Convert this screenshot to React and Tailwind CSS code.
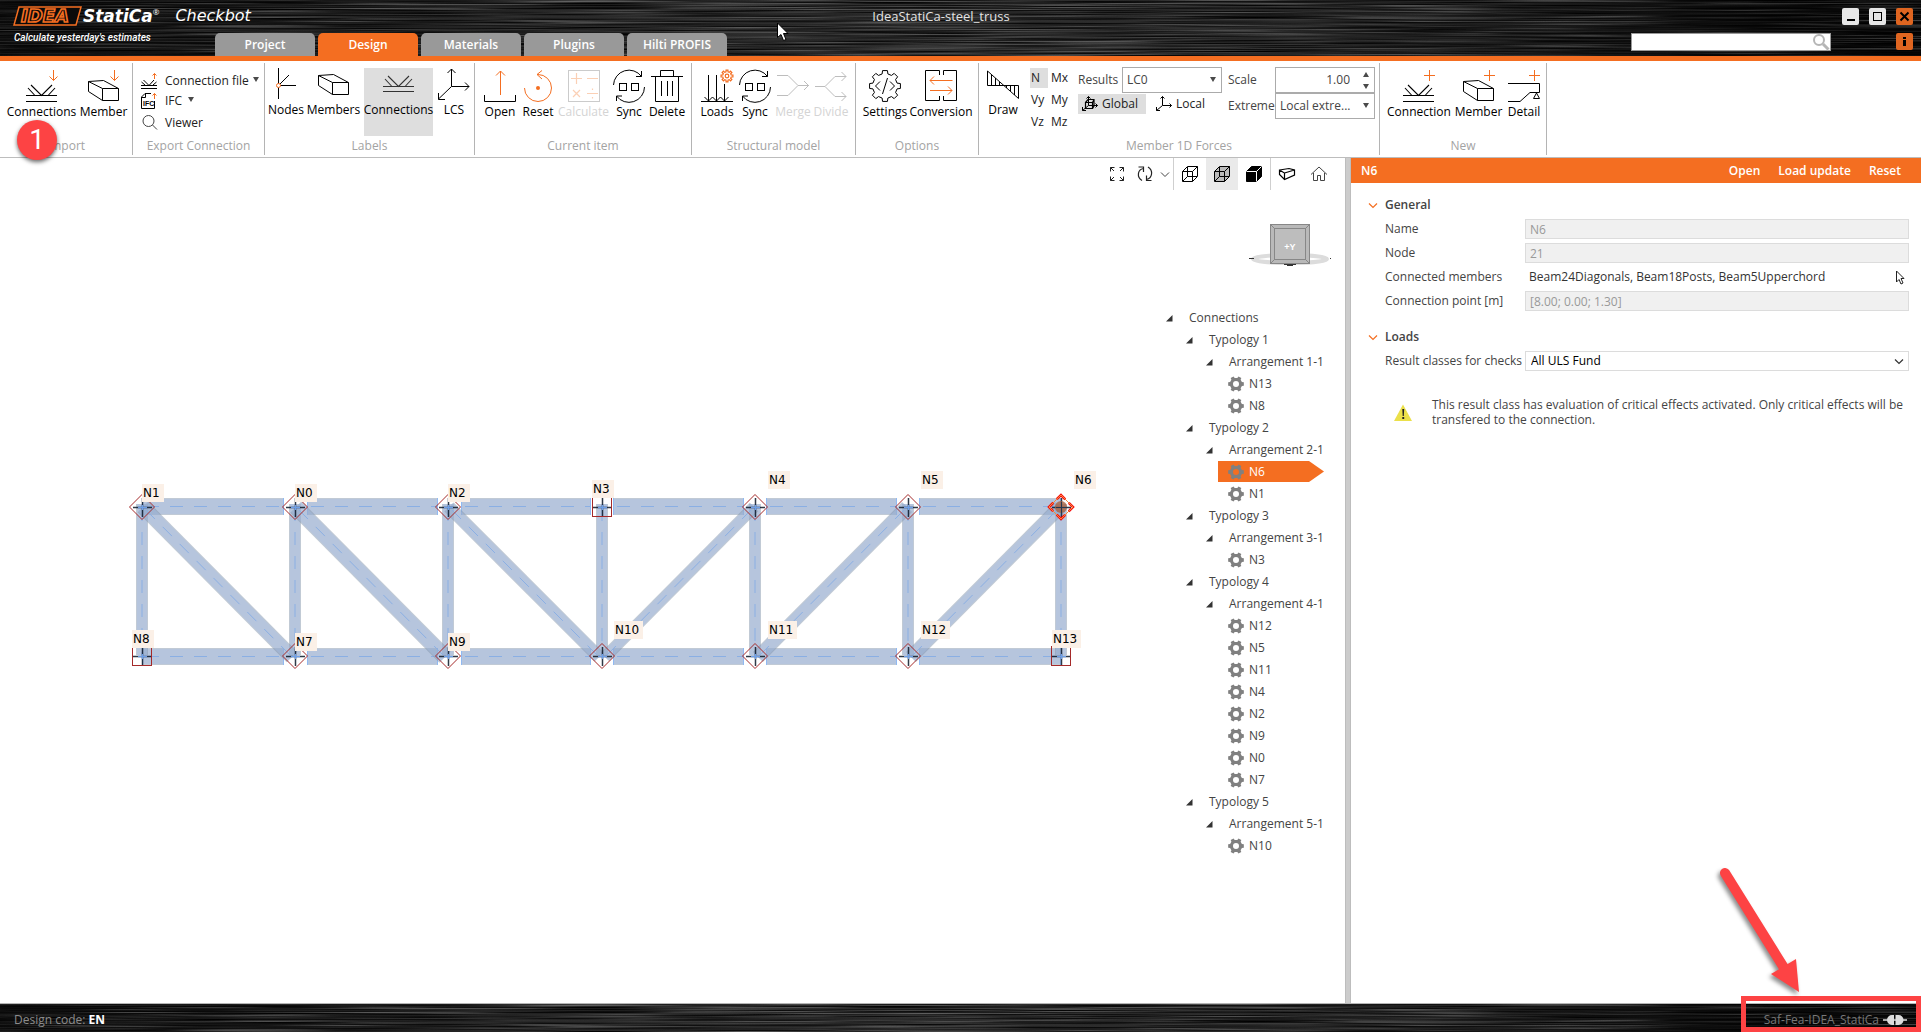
import React from "react";

const ORANGE = "#f46e21";

/* ---------- shared drawing helpers ---------- */

function Icon({ size = 32, w, h, stroke = "#000", sw = 1, className = "", children }) {
  const width = w || size;
  const height = h || size;
  return (
    <svg
      width={width}
      height={height}
      viewBox={`0 0 ${width} ${height}`}
      fill="none"
      stroke={stroke}
      strokeWidth={sw}
      className={`block shrink-0 overflow-visible ${className}`}
      aria-hidden="true"
    >
      {children}
    </svg>
  );
}

function gearPath(cx, cy, outer, inner, teeth) {
  const pts = [];
  const step = (Math.PI * 2) / teeth;
  for (let i = 0; i < teeth; i++) {
    const a = i * step;
    [
      [inner, -0.3],
      [outer, -0.2],
      [outer, 0.2],
      [inner, 0.3],
    ].forEach(([r, k]) => {
      pts.push(`${(cx + r * Math.cos(a + k * step)).toFixed(2)} ${(cy + r * Math.sin(a + k * step)).toFixed(2)}`);
    });
  }
  return `M${pts.join("L")}Z`;
}

function Brushed({ id }) {
  return (
    <svg className="absolute inset-0 h-full w-full" aria-hidden="true">
      <defs>
        <linearGradient id={`${id}-g`} x1="0" x2="1" y1="0" y2="0">
          <stop offset="0" stopColor="#0c0c0c" />
          <stop offset="0.3" stopColor="#2a2a2a" />
          <stop offset="0.5" stopColor="#303030" />
          <stop offset="0.75" stopColor="#232323" />
          <stop offset="0.92" stopColor="#0a0a0a" />
          <stop offset="1" stopColor="#050505" />
        </linearGradient>
        <filter id={`${id}-f`} x="0" y="0" width="100%" height="100%">
          <feTurbulence type="fractalNoise" baseFrequency="0.006 0.85" numOctaves="2" seed="4" />
          <feColorMatrix values="0 0 0 0 0.7  0 0 0 0 0.7  0 0 0 0 0.7  0.8 0 0 0 -0.36" />
        </filter>
        <filter id={`${id}-d`} x="0" y="0" width="100%" height="100%">
          <feTurbulence type="fractalNoise" baseFrequency="0.006 0.85" numOctaves="2" seed="9" />
          <feColorMatrix values="0 0 0 0 0  0 0 0 0 0  0 0 0 0 0  2.4 0 0 0 -0.95" />
        </filter>
      </defs>
      <rect width="100%" height="100%" fill={`url(#${id}-g)`} />
      <rect width="100%" height="100%" filter={`url(#${id}-f)`} />
      <rect width="100%" height="100%" filter={`url(#${id}-d)`} />
    </svg>
  );
}

/* ---------- ribbon icons ---------- */

function Joint({ top = 15, gap = 6, badge, stroke = "#000" }) {
  const base = top + 10;
  return (
    <Icon stroke={stroke}>
      <path d={`M0 ${base + 0.5}H31M0 ${base + gap + 0.5}H31`} />
      <path
        d={`M5 ${top}L15.500 ${base + 0.5}L26 ${top}M2 ${top + 3}L8.500 ${base}M29 ${top + 3}L22.500 ${base}`}
        strokeWidth="1.1"
      />
      {badge === "down" && <path d="M27.500 0V10.500M23.500 6.500L27.500 10.500L31.500 6.500" stroke={ORANGE} />}
      {badge === "plus" && <path d="M26.500 0V11M21 5.500H32" stroke={ORANGE} />}
    </Icon>
  );
}

function Box({ badge, up = 0 }) {
  return (
    <Icon>
      <g transform={`translate(0 ${-up})`}>
        <path d="M14.500 18.500H30.500V30.500H14.500ZM0.500 11.500L14.500 18.500M0.500 11.500L15.500 10.500L30.500 18.500M0.500 11.500V21.500L14.500 30.500" />
      </g>
      {badge === "down" && <path d="M26.500 0V10.500M22.500 6.500L26.500 10.500L30.500 6.500" stroke={ORANGE} />}
      {badge === "plus" && <path d="M26.500 0V11M21 5.500H32" stroke={ORANGE} />}
    </Icon>
  );
}

const NodesIcon = () => (
  <Icon>
    <path d="M8.500 0V31M10 17.500H26M10 16L19 7" />
    <circle cx="8.500" cy="17.500" r="2" stroke={ORANGE} fill="#fff" />
  </Icon>
);

const LcsIcon = () => (
  <Icon>
    <path d="M13.500 1V18.500H31M9.500 5L13.500 1L17.500 5M27 14.500L31 18.500L27 22.500M13.500 18.500L0.500 31M0.500 25V31.500H7" />
  </Icon>
);

const OpenIcon = () => (
  <Icon>
    <path d="M0.500 25V31.500H31.500V25" />
    <path d="M16.500 25V1M12 5.500L16.500 1L21 5.500" stroke={ORANGE} />
  </Icon>
);

const ResetIcon = () => (
  <Icon stroke={ORANGE}>
    <path d="M2.500 18A13.500 13.500 0 1 0 16 4.500H15M20 0.500L15 4.500L20 9" />
    <circle cx="16" cy="18" r="2" fill={ORANGE} stroke="none" />
  </Icon>
);

const CalculateIcon = () => (
  <Icon stroke="#cbcbcb">
    <rect x="0.500" y="0.500" width="31" height="31" />
    <path
      d="M3 8.500H14M8.500 3V14M19 8.500H30M5 20L12 27M12 20L5 27M19 23.500H30M24.500 18.500V20M24.500 27V28.500"
      stroke="#fbd0b5"
      strokeWidth="1.200"
    />
  </Icon>
);

const SyncIcon = () => (
  <Icon>
    <path d="M0.500 15A15.500 15.500 0 0 1 28.500 6.500M28.500 1V6.500H23M31.500 17A15.500 15.500 0 0 1 3.500 26M3.500 31V26H9" />
    <rect x="6.500" y="13.500" width="7" height="7" />
    <rect x="18.500" y="13.500" width="7" height="7" />
  </Icon>
);

const DeleteIcon = () => (
  <Icon>
    <path d="M0 6.500H32M9.500 6V0.500H22.500V6M4.500 7V31.500H27.500V7M10.500 11V26M16.500 11V26M21.500 11V26" />
  </Icon>
);

const LoadsIcon = () => (
  <Icon>
    <path d="M0 31.500H32M7.500 5V31M15.500 5V31M23.500 14V31M3.500 27L7.500 31L11.500 27L15.500 31L19.500 27L23.500 31L27.500 27" />
    <path d={gearPath(26, 6, 6, 4.3, 8)} stroke={ORANGE} strokeWidth="1.200" />
    <circle cx="26" cy="6" r="1.800" stroke={ORANGE} strokeWidth="1.200" />
  </Icon>
);

const MergeIcon = () => (
  <Icon stroke="#bdbdbd">
    <path d="M0 5.500H11L21 15.500L11 25.500H0M21 15.500H32M27 11L31.500 15.500L27 20" />
  </Icon>
);

const DivideIcon = () => (
  <Icon stroke="#bdbdbd">
    <path d="M0 16.500H10L20 6.500H31M10 16.500L20 26.500H31M26.500 2L31 6.500L26.500 11M26.500 22L31 26.500L26.500 31" />
  </Icon>
);

const SettingsIcon = () => (
  <Icon>
    <path d={gearPath(16, 16, 15.6, 12.4, 8)} strokeLinejoin="round" />
    <path d="M11 11.500L6.500 16L11 20.500M21 11.500L25.500 16L21 20.500M18.500 8L13.500 24" />
  </Icon>
);

const ConversionIcon = () => (
  <Icon>
    <path d="M14.500 5V0.500H0.500V30.500H14.500V26M18.500 5V0.500H31.500V30.500H18.500V26" />
    <path d="M27.500 10.500H5M9 6.500L5 10.500L9 14.500M5 20.500H27M23 16.500L27 20.500L23 24.500" stroke={ORANGE} />
  </Icon>
);

const DrawIcon = () => (
  <Icon>
    <path d="M0.500 3V17.500H31.500V30.500L0.500 3M4.500 7V17M8.500 10V17M12.500 14V17M19.500 18V20M23.500 18V23M27.500 18V27" />
  </Icon>
);

const DetailIcon = () => (
  <Icon>
    <path d="M0 13.500H31.500V22.500H22L12 31.500H0M28.500 23L25.500 28.500H31.500Z" />
    <path d="M26.500 0V11M21 5.500H32" stroke={ORANGE} />
  </Icon>
);

const ConnFileIcon = () => (
  <Icon size={16}>
    <path d="M0 12.500H16M0 15.500H16M2.500 7L8 12.500L13 7M0.500 9L4 12M15.500 9L12 12" />
    <path d="M13.500 6V0.500M11.500 2.500L13.500 0.500L15.500 2.500" stroke={ORANGE} />
  </Icon>
);

const IfcIcon = () => (
  <Icon size={16}>
    <path d="M10 0.500H4L0.500 4V15.500H13.500V8M4.500 0.500V4.500H0.500" />
    <text x="2" y="13" fontSize="7" fontWeight="700" fill="#000" stroke="none" fontFamily="Liberation Sans, sans-serif">
      IFC
    </text>
    <path d="M13.500 6V0.500M11.500 2.500L13.500 0.500L15.500 2.500" stroke={ORANGE} />
  </Icon>
);

const ViewerIcon = () => (
  <Icon size={16} stroke="#444">
    <circle cx="7.500" cy="6" r="5.500" />
    <path d="M11.500 10L16 14.500" />
  </Icon>
);

const AxesIcon = ({ solid }) => (
  <Icon size={16}>
    <path d="M6.500 0.500V9.500H15.500M4.500 2.500L6.500 0.500L8.500 2.500M13.500 7.500L15.500 9.500L13.500 11.500M6.500 9.500L0.500 14.500M0.500 11V14.500H4" />
    {solid && <path d="M3.500 6.500H10.500V12.500H3.500ZM3.500 6.500L6 3.500H12V10L10.500 12.500M10.500 6.500L12 3.500" strokeWidth="1.200" />}
  </Icon>
);

/* ---------- ribbon building blocks ---------- */

function Tool({ icon, label, width, active, disabled, raised }) {
  return (
    <button
      type="button"
      disabled={disabled}
      className={`flex h-17 flex-col items-center ${width} ${raised ? "" : "pt-0.5"} ${active ? "bg-[#dedede]" : ""} ${
        disabled ? "text-[#d4d4d4]" : "text-black"
      }`}
    >
      {icon}
      <span className="mt-0.5 whitespace-nowrap leading-4">{label}</span>
    </button>
  );
}

function Group({ title, width, children, pad = "pl-2" }) {
  return (
    <section className={`flex shrink-0 flex-col border-r border-[#b4b4b4] ${width}`}>
      <div className={`flex h-[75px] items-start pt-[5px] ${pad}`}>{children}</div>
      <h2 className="text-center leading-4 text-[#a3a3a3]">{title}</h2>
    </section>
  );
}

function Triangle({ up, className = "" }) {
  return (
    <svg width="6" height="5" viewBox="0 0 6 5" className={`block shrink-0 ${className}`} aria-hidden="true">
      <path d={up ? "M0 5L3 0L6 5Z" : "M0 0H6L3 5Z"} fill="#4a4a4a" />
    </svg>
  );
}

function RibbonSelect({ id, value, width }) {
  return (
    <div className={`relative ${width}`}>
      <select
        id={id}
        className="block h-[26px] w-full appearance-none rounded-none border border-[#ababab] bg-white pr-5 pl-1 text-[#444]"
        defaultValue={value}
      >
        <option>{value}</option>
      </select>
      <Triangle className="pointer-events-none absolute top-2.5 right-1.5" />
    </div>
  );
}

function Ribbon() {
  const force = "h-5 px-px text-left text-[#222]";
  return (
    <div className="flex h-[97px] shrink-0 border-b border-[#bdbdbd] bg-white pt-0.5 pb-0.5">
      <Group title="Import" width="w-[133px]">
        <div className="flex gap-1.5">
          <Tool icon={<Joint badge="down" />} label="Connections" width="w-[67px]" />
          <Tool icon={<Box badge="down" />} label="Member" width="w-[45px]" />
        </div>
      </Group>
      <Group title="Export Connection" width="w-[132px]" pad="pl-2">
        <div className="flex flex-col pt-px">
          <button type="button" className="flex h-6 items-center gap-2 whitespace-nowrap">
            <ConnFileIcon />
            Connection file <Triangle className="-mt-1 -ml-1" />
          </button>
          <button type="button" className="flex h-4 items-center gap-2">
            <IfcIcon />
            IFC <Triangle className="-mt-1 -ml-0.5" />
          </button>
          <button type="button" className="flex h-7 items-center gap-2">
            <ViewerIcon />
            Viewer
          </button>
        </div>
      </Group>
      <Group title="Labels" width="w-[210px]" pad="pl-1">
        <div className="flex gap-1">
          <Tool raised icon={<NodesIcon />} label="Nodes" width="w-[34px]" />
          <Tool raised icon={<Box up={4} />} label="Members" width="w-[53px]" />
          <Tool raised active icon={<Joint top={8} gap={5} stroke="#333" />} label="Connections" width="w-[69px]" />
          <Tool raised icon={<LcsIcon />} label="LCS" width="w-[34px]" />
        </div>
      </Group>
      <Group title="Current item" width="w-[217px]">
        <div className="flex gap-1">
          <Tool icon={<OpenIcon />} label="Open" width="w-[34px]" />
          <Tool icon={<ResetIcon />} label="Reset" width="w-[34px]" />
          <Tool disabled icon={<CalculateIcon />} label="Calculate" width="w-[49px]" />
          <Tool icon={<SyncIcon />} label="Sync" width="w-[34px]" />
          <Tool icon={<DeleteIcon />} label="Delete" width="w-[34px]" />
        </div>
      </Group>
      <Group title="Structural model" width="w-[164px]">
        <div className="flex gap-1">
          <Tool icon={<LoadsIcon />} label="Loads" width="w-[34px]" />
          <Tool icon={<SyncIcon />} label="Sync" width="w-[34px]" />
          <Tool disabled icon={<MergeIcon />} label="Merge" width="w-[34px]" />
          <Tool disabled icon={<DivideIcon />} label="Divide" width="w-[34px]" />
        </div>
      </Group>
      <Group title="Options" width="w-[123px]">
        <div className="flex gap-1">
          <Tool icon={<SettingsIcon />} label="Settings" width="w-[42px]" />
          <Tool icon={<ConversionIcon />} label="Conversion" width="w-[62px]" />
        </div>
      </Group>
      <Group title="Member 1D Forces" width="w-[401px]" pad="pl-[7px]">
        <Tool raised icon={<DrawIcon />} label="Draw" width="w-[34px]" />
        <div className="ml-2.5 grid grid-cols-[18px_20px] gap-x-0.5 gap-y-0.5">
          <button type="button" className={`${force} bg-[#dedede]`}>N</button>
          <button type="button" className={force}>Mx</button>
          <button type="button" className={force}>Vy</button>
          <button type="button" className={force}>My</button>
          <button type="button" className={force}>Vz</button>
          <button type="button" className={force}>Mz</button>
        </div>
        <div className="-mt-px ml-2 w-36">
          <div className="flex items-center justify-between">
            <label htmlFor="results" className="text-[#444]">Results</label>
            <RibbonSelect id="results" value="LC0" width="w-[100px]" />
          </div>
          <div className="mt-px flex gap-1.5">
            <button type="button" className="flex h-5 w-[68px] items-center gap-1 bg-[#dedede] px-1">
              <AxesIcon solid />
              Global
            </button>
            <button type="button" className="flex h-5 items-center gap-1 px-1">
              <AxesIcon />
              Local
            </button>
          </div>
        </div>
        <div className="-mt-px ml-1.5 grid grid-cols-[47px_100px] items-center text-[#444]">
          <label htmlFor="scale">Scale</label>
          <div className="flex h-[26px] border border-[#ababab]">
            <input id="scale" defaultValue="1.00" className="w-full min-w-0 pr-1 text-right text-[#444] outline-none" />
            <div className="flex w-5 shrink-0 flex-col items-center justify-around pl-1">
              <button type="button" aria-label="Increase scale"><Triangle up /></button>
              <button type="button" aria-label="Decrease scale"><Triangle /></button>
            </div>
          </div>
          <label htmlFor="extreme">Extreme</label>
          <RibbonSelect id="extreme" value="Local extre..." width="w-[100px]" />
        </div>
      </Group>
      <Group title="New" width="w-[167px]">
        <div className="flex gap-1.5">
          <Tool icon={<Joint badge="plus" />} label="Connection" width="w-[62px]" />
          <Tool icon={<Box badge="plus" />} label="Member" width="w-[45px]" />
          <Tool icon={<DetailIcon />} label="Detail" width="w-[34px]" />
        </div>
      </Group>
    </div>
  );
}

/* ---------- title bar ---------- */

function Logo() {
  return (
    <div className="w-[215px] shrink-0 pt-1.5 pl-3">
      <div className="flex items-center whitespace-nowrap text-white italic">
        <svg width="71" height="20" viewBox="0 0 71 20" className="block shrink-0" role="img" aria-label="IDEA">
          <path d="M7 1H69L64 19H2Z" fill="#0a0a0a" stroke={ORANGE} strokeWidth="1.500" />
          <text
            x="9"
            y="16"
            fontFamily="DejaVu Sans, sans-serif"
            fontWeight="700"
            fontStyle="italic"
            fontSize="18"
            fill="#0a0a0a"
            stroke={ORANGE}
            strokeWidth="1.600"
          >
            IDEA
          </text>
        </svg>
        <span className="font-['DejaVu_Sans',sans-serif] text-[17px] leading-5 font-bold">StatiCa</span>
        <sup className="text-[8px]">®</sup>
        <span className="ml-4 font-['DejaVu_Sans',sans-serif] text-[16px] leading-5">Checkbot</span>
      </div>
      <p className="mt-1 ml-0.5 font-['Roboto','Liberation_Sans',sans-serif] text-[10px] leading-4 font-medium text-white italic">
        Calculate yesterday's estimates
      </p>
    </div>
  );
}

function TitleBar() {
  const tabs = ["Project", "Design", "Materials", "Plugins", "Hilti PROFIS"];
  const winBtn = "flex h-[17px] w-[17px] items-center justify-center rounded-[2px]";
  return (
    <header className="relative h-[61px] shrink-0 overflow-hidden border-b-[5px] border-[#f46e21] bg-[#111]">
      <Brushed id="top" />
      <div className="relative flex h-14">
        <Logo />
        <div className="flex min-w-0 flex-1 flex-col justify-between">
          <h1 className="pt-2 pl-9 text-center text-[13px] leading-4 text-[#e4e4e4]">IdeaStatiCa-steel_truss</h1>
          <nav className="flex gap-[3px]">
            {tabs.map((t) => (
              <button
                key={t}
                type="button"
                className={`h-[23px] w-[100px] rounded-t-[5px] font-semibold text-white ${
                  t === "Design" ? "bg-[#f46e21]" : "bg-[#999]"
                }`}
              >
                {t}
              </button>
            ))}
          </nav>
        </div>
        <div className="flex w-[290px] shrink-0 flex-col gap-2 pt-2 pr-2">
          <div className="flex justify-end gap-2.5">
            <button type="button" aria-label="Minimize" className={`${winBtn} bg-[#e6e6e6]`}>
              <span className="mt-1.5 h-0.5 w-2 bg-black" />
            </button>
            <button type="button" aria-label="Maximize" className={`${winBtn} bg-[#e6e6e6]`}>
              <span className="h-[9px] w-[9px] border border-black" />
            </button>
            <button type="button" aria-label="Close" className={`${winBtn} bg-[#df6520]`}>
              <Icon size={9} sw={2}>
                <path d="M0.500 0.500L8.500 8.500M8.500 0.500L0.500 8.500" />
              </Icon>
            </button>
          </div>
          <div className="flex justify-between">
            <div className="flex h-[18px] w-[200px] border border-[#999] bg-white">
              <input aria-label="Search" className="min-w-0 flex-1 px-1 outline-none" />
              <Icon size={17} stroke="#b5b5b5" sw={2}>
                <circle cx="6" cy="6" r="5" />
                <path d="M10 10L15.500 15.500" strokeWidth="3" />
              </Icon>
            </div>
            <button type="button" aria-label="Information" className={`${winBtn} bg-[#df6520]`}>
              <Icon w={3} h={9} stroke="none">
                <path d="M0 0H3V2H0ZM0 3H3V9H0Z" fill="#000" />
              </Icon>
            </button>
          </div>
        </div>
      </div>
    </header>
  );
}

/* ---------- model view ---------- */

const XS = [142, 295, 448, 602, 755, 908, 1061];
const TOP = 349;
const BOTTOM = 498;
const SPANS = [
  [142, 284],
  [307, 438],
  [461, 591],
  [613, 744],
  [766, 897],
  [919, 1061],
];
const DIAGONALS = [
  [0, 1, 15],
  [1, 2, 16],
  [2, 3, 13],
  [4, 3, 12],
  [5, 4, 14],
  [6, 5, 14],
];
const NODES = [
  { n: "N1", c: 0, y: TOP, lx: 142, ly: 326 },
  { n: "N0", c: 1, y: TOP, lx: 295, ly: 326 },
  { n: "N2", c: 2, y: TOP, lx: 448, ly: 326 },
  { n: "N3", c: 3, y: TOP, lx: 592, ly: 322, square: true },
  { n: "N4", c: 4, y: TOP, lx: 768, ly: 313 },
  { n: "N5", c: 5, y: TOP, lx: 921, ly: 313 },
  { n: "N6", c: 6, y: TOP, lx: 1074, ly: 313, selected: true },
  { n: "N8", c: 0, y: BOTTOM, lx: 132, ly: 472, square: true },
  { n: "N7", c: 1, y: BOTTOM, lx: 295, ly: 475 },
  { n: "N9", c: 2, y: BOTTOM, lx: 448, ly: 475 },
  { n: "N10", c: 3, y: BOTTOM, lx: 614, ly: 463 },
  { n: "N11", c: 4, y: BOTTOM, lx: 768, ly: 463 },
  { n: "N12", c: 5, y: BOTTOM, lx: 921, ly: 463 },
  { n: "N13", c: 6, y: BOTTOM, lx: 1052, ly: 472, square: true },
];

function Beam({ x1, y1, x2, y2, w }) {
  return (
    <g>
      <line x1={x1} y1={y1} x2={x2} y2={y2} stroke="#8396ab" strokeOpacity="0.5" strokeWidth={w} />
      <line x1={x1} y1={y1} x2={x2} y2={y2} stroke="#a4bfe8" strokeOpacity="0.4" strokeWidth={w - 2} />
      <line x1={x1} y1={y1} x2={x2} y2={y2} stroke="#8aafe4" strokeDasharray="13 11" strokeDashoffset="-4" />
    </g>
  );
}

function Truss() {
  return (
    <svg viewBox="0 0 1095 845" className="block h-full w-full overflow-visible" role="img" aria-label="Steel truss model">
      {[TOP - 0.5, BOTTOM + 0.5].map((y) =>
        SPANS.map(([a, b]) => (
          <g key={`${y}-${a}`}>
            <Beam x1={a} y1={y} x2={b} y2={y} w={17} />
            <path d={`M${a + 0.5} ${y - 8.5}V${y + 8.5}M${b - 0.5} ${y - 8.5}V${y + 8.5}`} stroke="#90b9f2" />
          </g>
        ))
      )}
      {XS.map((x) => (
        <Beam key={x} x1={x} y1={TOP - 3} x2={x} y2={BOTTOM - 1} w={12} />
      ))}
      {DIAGONALS.map(([t, b, w]) => {
        const s = Math.sign(XS[b] - XS[t]);
        return <Beam key={t} x1={XS[t] + s * 1} y1={TOP} x2={XS[b] - s * 3} y2={BOTTOM + 1} w={w} />;
      })}
      {NODES.map((p) => {
        const x = XS[p.c];
        const { y } = p;
        return (
          <g key={p.n} fill="none">
            <path
              d={`M${x - 9} ${y + 0.5}H${x + 10}M${x + 0.5} ${y - 9}V${y + 10}`}
              stroke="#0a1626"
              strokeOpacity="0.850"
              strokeWidth="1.500"
            />
            <path d={`M${x - 4} ${y + 0.5}H${x + 5}M${x + 0.5} ${y - 2}V${y + 3}`} stroke="#6f9fe6" strokeWidth="1.500" />
            {p.square && <rect x={x - 9.5} y={y - 9.5} width="19" height="19" stroke="#a52a2a" />}
            {p.selected && (
              <>
                <circle cx={x} cy={y} r="6" fill="#a8623f" fillOpacity="0.800" />
                <path d={`M${x - 5} ${y + 0.5}H${x + 6}M${x + 0.5} ${y - 5}V${y + 9}`} stroke="#26374f" />
                <path
                  d={`M${x - 12} ${y}L${x} ${y - 12}L${x + 12} ${y}L${x} ${y + 12}Z`}
                  stroke="#f60d0d"
                  strokeWidth="2.500"
                  strokeDasharray="6 5 12 5 12 5 12 5 6 0"
                />
                <path d={`M${x - 12} ${y}L${x} ${y - 12}L${x + 12} ${y}L${x} ${y + 12}Z`} stroke="#f68a3a" />
              </>
            )}
            {!p.square && !p.selected && (
              <path d={`M${x - 12.5} ${y}L${x} ${y - 12.5}L${x + 12.5} ${y}L${x} ${y + 12.5}Z`} stroke="#a52a2a" />
            )}
          </g>
        );
      })}
      {NODES.map((p) => (
        <g key={p.n}>
          <rect x={p.lx} y={p.ly} width={p.n.length > 2 ? 29 : 22} height="18" fill="#fbf0e7" />
          <text x={p.lx + 1} y={p.ly + 13} fontFamily="DejaVu Sans, sans-serif" fontSize="12" fill="#000">
            {p.n}
          </text>
        </g>
      ))}
    </svg>
  );
}

function Cube({ fill = "none", solid }) {
  return (
    <Icon size={16}>
      <path d="M0.500 5.500L5.500 0.500H15.500V10.500L10.500 15.500H0.500Z" fill={solid ? "#000" : fill} />
      <path d="M0.500 5.500H10.500V15.500M10.500 5.500L15.500 0.500" stroke={solid ? "#fff" : "#000"} />
      {!solid && <path d="M5.500 1V10.500H15M5.500 10.500L1 15" />}
    </Icon>
  );
}

function ViewToolbar() {
  const cell = "flex h-8 w-8 items-center justify-center";
  return (
    <div className="flex h-8 items-center justify-end pr-2.5" role="toolbar" aria-label="View">
      <button type="button" aria-label="Zoom to fit" className="flex h-8 w-6 items-center justify-center">
        <Icon size={14} stroke="#222">
          <path d="M4.500 0.500H0.500V4.500M0.500 0.500L4 4M9.500 0.500H13.500V4.500M13.500 0.500L10 4M0.500 9.500V13.500H4.500M0.500 13.500L4 10M13.500 9.500V13.500H9.500M13.500 13.500L10 10" />
        </Icon>
      </button>
      <button type="button" aria-label="Rotate" className="flex h-8 w-11 items-center justify-end gap-2 pr-1">
        <Icon size={16} stroke="#222" sw={1.2}>
          <path d="M5 14.500C-0.500 11 0.500 3.500 6.500 2.500M1.500 1H6.500V6M11 1C16.500 4.500 15.500 12 9.500 13.500M14.500 14.500H9.500V9.500" />
        </Icon>
        <Icon w={8} h={5} stroke="#444">
          <path d="M0 0.500L4 4.500L8 0.500" />
        </Icon>
      </button>
      <div className="flex border-x border-[#cfcfcf]">
        <button type="button" aria-label="Wireframe" className={cell}><Cube /></button>
        <button type="button" aria-label="Transparent" className={`${cell} bg-[#eaeaea]`}><Cube fill="#bbb" /></button>
        <button type="button" aria-label="Solid" className={cell}><Cube solid /></button>
      </div>
      <button type="button" aria-label="Perspective" className={cell}>
        <Icon size={16} sw={1.2}>
          <path d="M0.500 4L10 2.500L15.500 4V9L5.500 13.500L0.500 8.500ZM0.500 4L5.500 7V13.500M5.500 7L15.500 4" />
        </Icon>
      </button>
      <button type="button" aria-label="Home view" className={cell}>
        <Icon size={16} stroke="#444">
          <path d="M0 8.500L8 1L16 8.500M2.500 7V14.500H6.500V9.500H9.500V14.500H13.500V7" />
        </Icon>
      </button>
    </div>
  );
}

function ViewCube() {
  return (
    <svg width="84" height="44" viewBox="0 0 84 44" className="block" role="img" aria-label="View from +Y">
      <ellipse cx="42" cy="36" rx="37" ry="4" fill="none" stroke="#dcdcdc" strokeWidth="4" />
      <path d="M1 35.500H6M82 35.500H83" stroke="#333" />
      <rect x="22.500" y="1.500" width="39" height="39" fill="#b9b9b9" stroke="#878787" />
      <rect x="26.500" y="5.500" width="31" height="31" fill="#bdbdbd" stroke="#878787" />
      <path d="M22 1L27 6M62 1L57 6M22 41L27 36M62 41L57 36" stroke="#878787" />
      <text x="42" y="27" textAnchor="middle" fontFamily="Liberation Sans, sans-serif" fontSize="9" fontWeight="700" fill="#fff">
        +Y
      </text>
      <path d="M36 41.500H48M39 42.500H45" stroke="#333" />
    </svg>
  );
}

const TREE = [
  ["Typology 1", "Arrangement 1-1", ["N13", "N8"]],
  ["Typology 2", "Arrangement 2-1", ["N6", "N1"]],
  ["Typology 3", "Arrangement 3-1", ["N3"]],
  ["Typology 4", "Arrangement 4-1", ["N12", "N5", "N11", "N4", "N2", "N9", "N0", "N7"]],
  ["Typology 5", "Arrangement 5-1", ["N10"]],
];

function Branch({ label, children }) {
  return (
    <li>
      <button type="button" className="flex h-[22px] items-center gap-4 whitespace-nowrap">
        <svg width="7" height="7" viewBox="0 0 7 7" className="block" aria-hidden="true">
          <path d="M6.500 0V6.500H0Z" fill="#333" />
        </svg>
        {label}
      </button>
      {children}
    </li>
  );
}

function Tree() {
  return (
    <ul className="ml-[71px] text-[#444]">
      <Branch label="Connections">
        <ul className="ml-5">
          {TREE.map(([typology, arrangement, leaves]) => (
            <Branch key={typology} label={typology}>
              <ul className="ml-5">
                <Branch label={arrangement}>
                  <ul className="ml-3">
                    {leaves.map((leaf) => (
                      <li key={leaf} className="h-[22px]">
                        <button
                          type="button"
                          className={`flex h-[21px] w-[106px] items-center gap-[5px] pl-2.5 ${
                            leaf === "N6"
                              ? "bg-[#f46e21] text-white [clip-path:polygon(0_0,91px_0,100%_50%,91px_100%,0_100%)]"
                              : ""
                          }`}
                        >
                          <Icon size={16} stroke="none">
                            <path
                              fillRule="evenodd"
                              fill="#808080"
                              d={`${gearPath(8, 8, 8, 6.2, 6)}M11 8A3 3 0 1 0 5 8A3 3 0 1 0 11 8Z`}
                            />
                          </Icon>
                          {leaf}
                        </button>
                      </li>
                    ))}
                  </ul>
                </Branch>
              </ul>
            </Branch>
          ))}
        </ul>
      </Branch>
    </ul>
  );
}

/* ---------- property panel ---------- */

function SectionTitle({ children }) {
  return (
    <h3 className="flex h-6 items-center gap-2 font-semibold text-[#444]">
      <Icon w={8} h={5} stroke={ORANGE} sw={1.2}>
        <path d="M0 0.500L4 4.500L8 0.500" />
      </Icon>
      {children}
    </h3>
  );
}

function Field({ id, label, value }) {
  return (
    <div className="grid h-6 grid-cols-[140px_1fr] items-center">
      <label htmlFor={id} className="whitespace-nowrap text-[#444]">{label}</label>
      <input id={id} disabled defaultValue={value} className="h-5 min-w-0 border border-[#dcdcdc] bg-[#f0f0f0] px-1 text-[#999]" />
    </div>
  );
}

function Properties() {
  return (
    <aside className="flex w-[570px] shrink-0 flex-col bg-white">
      <div className="flex h-[25px] shrink-0 items-center bg-[#f46e21] pr-5 pl-2.5 font-semibold text-white">
        <h2 className="flex-1">N6</h2>
        <div className="flex gap-[18px]">
          <button type="button">Open</button>
          <button type="button">Load update</button>
          <button type="button">Reset</button>
        </div>
      </div>
      <div className="pt-2.5 pr-3 pl-[18px]">
        <SectionTitle>General</SectionTitle>
        <div className="pl-4">
          <Field id="name" label="Name" value="N6" />
          <Field id="node" label="Node" value="21" />
          <div className="grid h-6 grid-cols-[140px_1fr_14px] items-center text-[#333]">
            <span className="text-[#444]">Connected members</span>
            <span className="pl-1 whitespace-nowrap">Beam24Diagonals, Beam18Posts, Beam5Upperchord</span>
            <button type="button" aria-label="Pick members">
              <Icon w={10} h={15} stroke="#222">
                <path d="M1.500 1V12L4 9.500L6 14L8 13L6 8.500H9Z" fill="#fff" />
              </Icon>
            </button>
          </div>
          <Field id="point" label="Connection point [m]" value="[8.00; 0.00; 1.30]" />
        </div>
        <div className="mt-3">
          <SectionTitle>Loads</SectionTitle>
        </div>
        <div className="pl-4">
          <div className="grid h-6 grid-cols-[140px_1fr] items-center">
            <label htmlFor="classes" className="whitespace-nowrap text-[#444]">Result classes for checks</label>
            <div className="relative">
              <select
                id="classes"
                defaultValue="All ULS Fund"
                className="block h-5 w-full appearance-none rounded-none border border-[#dcdcdc] bg-white px-[5px] leading-4 text-black"
              >
                <option>All ULS Fund</option>
              </select>
              <Icon w={8} h={5} stroke="#333" sw={1.2} className="pointer-events-none absolute top-2 right-1.5">
                <path d="M0 0.500L4 4.500L8 0.500" />
              </Icon>
            </div>
          </div>
        </div>
        <div className="mt-6 flex items-center gap-5 pl-[25px]" role="note">
          <Icon w={18} h={17} stroke="none">
            <path d="M9 0.500L18 17H0Z" fill="#ebe04a" />
            <path d="M8.300 5H10.200L9.800 12H8.700ZM8.300 13H10.200V15H8.300Z" fill="#222" />
          </Icon>
          <p className="flex-1 leading-[15px] text-[#444]">
            This result class has evaluation of critical effects activated. Only critical effects will be transfered to the
            connection.
          </p>
        </div>
      </div>
    </aside>
  );
}

/* ---------- status bar and annotations ---------- */

function StatusBar() {
  return (
    <footer className="relative h-[29px] shrink-0 overflow-hidden border-t border-[#b5b5b5] bg-[#070707]">
      <Brushed id="bottom" />
      <div className="relative flex h-full items-center justify-between px-3.5 pt-1 text-[#8c8c8c]">
        <p>
          Design code: <strong className="font-bold text-white">EN</strong>
        </p>
        <p className="flex items-center gap-1 text-[#777]">
          Saf-Fea-IDEA_StatiCa
          <Icon w={24} h={10} stroke="#ddd">
            <path d="M0 5H24" strokeWidth="1.500" />
            <path d="M11 0H9A5 5 0 0 0 9 10H11ZM12.500 0H15.500A5 5 0 0 1 15.500 10H12.500Z" fill="#ddd" stroke="none" />
          </Icon>
        </p>
      </div>
    </footer>
  );
}

function Annotations() {
  return (
    <div className="pointer-events-none">
      <span className="absolute top-[120px] left-[17px] flex h-10 w-10 items-center justify-center rounded-full bg-[#fd4344] font-['Roboto',sans-serif] text-[28px] text-white shadow-[0_2px_4px_rgba(0,0,0,0.6)]">
        1
      </span>
      <svg width="14" height="20" viewBox="0 0 14 20" className="absolute top-[22px] left-[776px]" aria-hidden="true">
        <path d="M1.500 1V15.500L5 12.500L7.500 18.500L10 17.500L7.500 11.500H12Z" fill="#fff" stroke="#000" />
      </svg>
      <div className="absolute right-0 bottom-0 h-9 w-[180px] border-[5px] border-[#fd4344]" />
      <svg
        width="100"
        height="135"
        viewBox="0 0 100 135"
        className="absolute right-[111px] bottom-[33px] overflow-visible drop-shadow-[-2px_3px_2px_rgba(0,0,0,0.45)]"
        aria-hidden="true"
      >
        <path d="M15 9L76 107" stroke="#fd4344" strokeWidth="10" strokeLinecap="round" />
        <path d="M86 95L89 128L61 110Z" fill="#fd4344" />
      </svg>
    </div>
  );
}

export default function App() {
  return (
    <div className="relative flex h-screen flex-col overflow-hidden bg-white font-['Open_Sans','Noto_Sans',sans-serif] text-[12px] text-[#222]">
      <TitleBar />
      <Ribbon />
      <main className="flex min-h-0 flex-1">
        <div className="min-w-0 flex-1">
          <Truss />
        </div>
        <div className="w-[250px] shrink-0">
          <ViewToolbar />
          <div className="mt-[33px] mb-10 ml-[153px]">
            <ViewCube />
          </div>
          <Tree />
        </div>
        <div className="w-1.5 shrink-0 border-x border-[#bdbdbd] bg-[#ccc]" />
        <Properties />
      </main>
      <StatusBar />
      <Annotations />
    </div>
  );
}
